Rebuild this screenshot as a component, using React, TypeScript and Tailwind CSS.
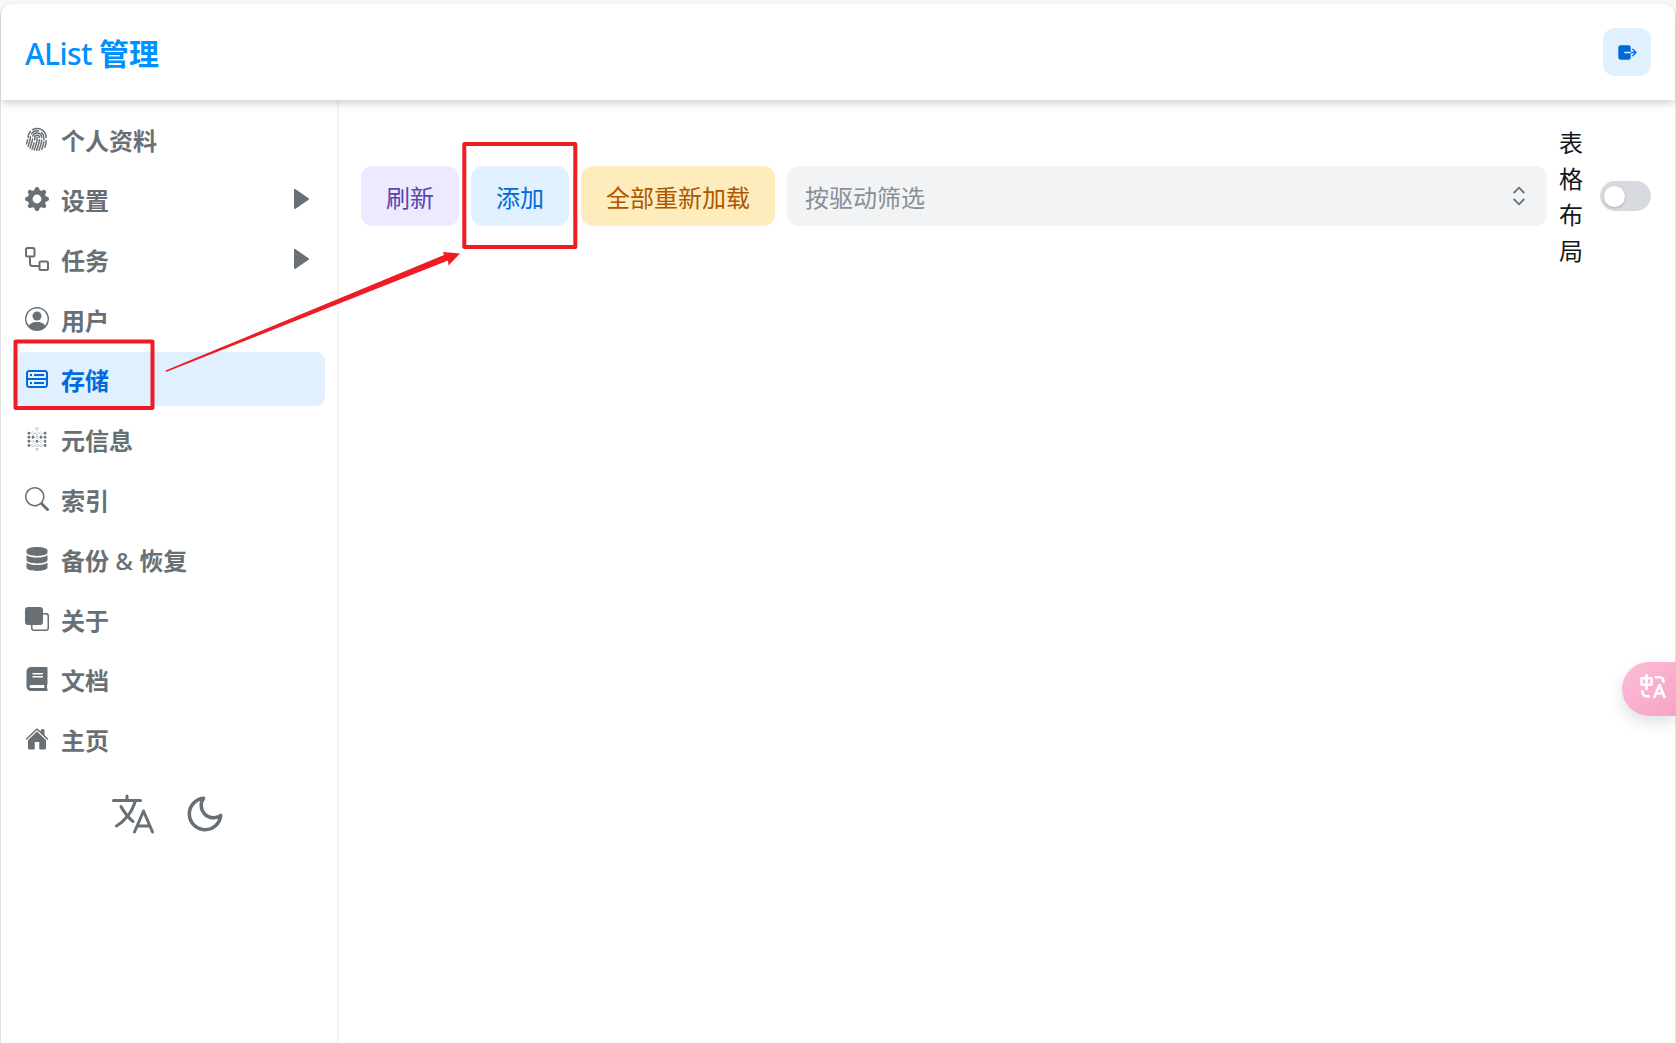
import React from 'react'
import type { IconType } from 'react-icons'
import { BiSolidRightArrow } from 'react-icons/bi'
import { BsFingerprint, BsFront, BsGearFill, BsPersonCircle, BsSearch } from 'react-icons/bs'
import { CgDatabase } from 'react-icons/cg'
import { FaBook, FaDatabase } from 'react-icons/fa'
import { FiMoon } from 'react-icons/fi'
import { IoExit, IoHome, IoLanguageOutline } from 'react-icons/io5'
import { SiMetabase } from 'react-icons/si'

interface MenuItem {
  title: string
  icon: IconType | typeof WorkflowIcon
  expandable?: boolean
  active?: boolean
}

function WorkflowIcon({ size, className }: { size: number; className?: string }) {
  return (
    <svg className={className} width={size} height={size} viewBox="0 0 24 24" fill="none" stroke="currentColor" strokeWidth="2">
      <rect x="1" y="1" width="8.5" height="8.5" rx="1.5" />
      <rect x="14.5" y="14.5" width="8.5" height="8.5" rx="1.5" />
      <path d="M5 9.5v7A2.5 2.5 0 0 0 7.5 19h7" />
    </svg>
  )
}

const menu: MenuItem[] = [
  { title: '个人资料', icon: BsFingerprint },
  { title: '设置', icon: BsGearFill, expandable: true },
  { title: '任务', icon: WorkflowIcon, expandable: true },
  { title: '用户', icon: BsPersonCircle },
  { title: '存储', icon: CgDatabase, active: true },
  { title: '元信息', icon: SiMetabase },
  { title: '索引', icon: BsSearch },
  { title: '备份 & 恢复', icon: FaDatabase },
  { title: '关于', icon: BsFront },
  { title: '文档', icon: FaBook },
  { title: '主页', icon: IoHome },
]

function Header() {
  return (
    <header className="relative z-10 flex h-24 shrink-0 items-center justify-between rounded-t-xl bg-white px-6 shadow-[0_4px_8px_-1px_rgba(0,0,0,0.2)]">
      <h1 className="pt-[3px] text-[30px] leading-none font-medium tracking-[-0.6px] text-[#0091ff]">
        AList <span className="font-bold tracking-normal">管理</span>
      </h1>
      <button className="flex size-12 items-center justify-center rounded-xl bg-[#e1f0ff] text-[#006adc]">
        <IoExit size={21} />
      </button>
    </header>
  )
}

function SideMenu() {
  return (
    <aside className="flex w-[337px] shrink-0 flex-col border-r border-[#f3f3f4] p-3 shadow-[1px_0_3px_rgba(0,0,0,0.04)]">
      <nav className="flex flex-col gap-1.5">
        {menu.map(({ title, icon: Icon, expandable, active }) => (
          <a
            key={title}
            className={`flex h-[54px] items-center rounded-[9px] px-3 ${active ? 'bg-[#e1f0ff] text-[#006adc]' : 'text-[#687076]'}`}
          >
            <Icon size={24} className="mr-3" />
            <span className="flex-1 pt-[3px] text-2xl font-bold">
              {title.split(' ').map((word, i) => (
                <React.Fragment key={word}>
                  {i > 0 && ' '}
                  {word === '&' ? <span className="font-medium">&amp;</span> : word}
                </React.Fragment>
              ))}
            </span>
            {expandable && <BiSolidRightArrow size={24} />}
          </a>
        ))}
      </nav>
      <div className="mt-6 mr-1 flex items-center justify-center gap-[27px] text-[#687076]">
        <IoLanguageOutline size={48} />
        <FiMoon size={42} />
      </div>
    </aside>
  )
}

function Toolbar() {
  return (
    <div className="flex items-center gap-3 text-2xl">
      <button className="h-[60px] w-[98px] rounded-xl bg-[#ede9fe] pt-[3px] text-[#5746af]">刷新</button>
      <button className="h-[60px] w-[98px] rounded-xl bg-[#e1f0ff] pt-[3px] text-[#006adc]">添加</button>
      <button className="h-[60px] w-[194px] rounded-xl bg-[#ffecbc] pt-[3px] text-[#ad5700]">全部重新加载</button>
      <div className="flex h-[60px] flex-1 items-center justify-between rounded-xl bg-[#f1f3f5] pr-4 pl-[18px] text-[#889096]">
        <span className="pt-[3px]">按驱动筛选</span>
        <svg width="24" height="24" viewBox="0 0 24 24" fill="none" stroke="#687076" strokeWidth="1.8">
          <path d="M6.7 9 12 3.7 17.3 9M6.7 15l5.3 5.3 5.3-5.3" />
        </svg>
      </div>
      <label className="flex items-center gap-[17px] text-[#11181c]">
        <span className="w-6 pt-0.5 leading-9">表格布局</span>
        <span className="flex h-[30px] w-[51px] items-center rounded-full bg-[#d7dbdf] p-1">
          <span className="size-[21px] rounded-full bg-white shadow-[0_1px_3px_rgba(0,0,0,0.2)]" />
        </span>
      </label>
    </div>
  )
}

function TranslateBall() {
  return (
    <div className="absolute top-[662px] right-0 flex h-[54px] w-[54px] items-center rounded-l-full bg-gradient-to-br from-[#fdbdd7] to-[#f5a3c6] pb-1.5 pl-[17px] shadow-[0_6px_16px_rgba(0,0,0,0.13)]">
      <svg width="28" height="26" viewBox="0 0 28 26" fill="none" stroke="#fff" strokeWidth="2.6" strokeLinecap="round" strokeLinejoin="round">
        <path d="M2.5 5.3h10v6.5h-10zM7.5 2v14M17 4.2h3.5a4 4 0 0 1 4 4v.5M3.5 18.3v1a4 4 0 0 0 4 4H10M15.5 24l5-12 5 12M17.3 20.5h6.5" />
      </svg>
    </div>
  )
}

// Red boxes and arrow guiding from the menu entry to the add button
function Annotations() {
  return (
    <svg className="pointer-events-none absolute inset-0 z-20" width="1676" height="1043" viewBox="0 0 1676 1043" fill="none">
      <g stroke="#ee1c24" strokeWidth="4" strokeLinejoin="round">
        <rect x="15.5" y="341.5" width="137" height="66.5" />
        <rect x="464.3" y="144" width="111" height="103" />
      </g>
      <path fill="#ee1c24" d="M165.5 370.5 444 255l-1-3 17 1.5-11.5 12-.5-5L166 372z" />
    </svg>
  )
}

export default function App() {
  return (
    <div className="relative h-[1043px] w-[1676px] overflow-hidden bg-[#f7f7f7] pt-1 font-['Noto_Sans','Noto_Sans_CJK_SC',sans-serif]">
      <div className="flex h-[1051px] flex-col rounded-t-xl border-x border-[#e2e2e2] bg-white">
        <Header />
        <div className="flex flex-1">
          <SideMenu />
          <main className="min-w-0 flex-1 pt-[23px] pr-6 pl-[23px]">
            <Toolbar />
          </main>
        </div>
      </div>
      <TranslateBall />
      <Annotations />
    </div>
  )
}
